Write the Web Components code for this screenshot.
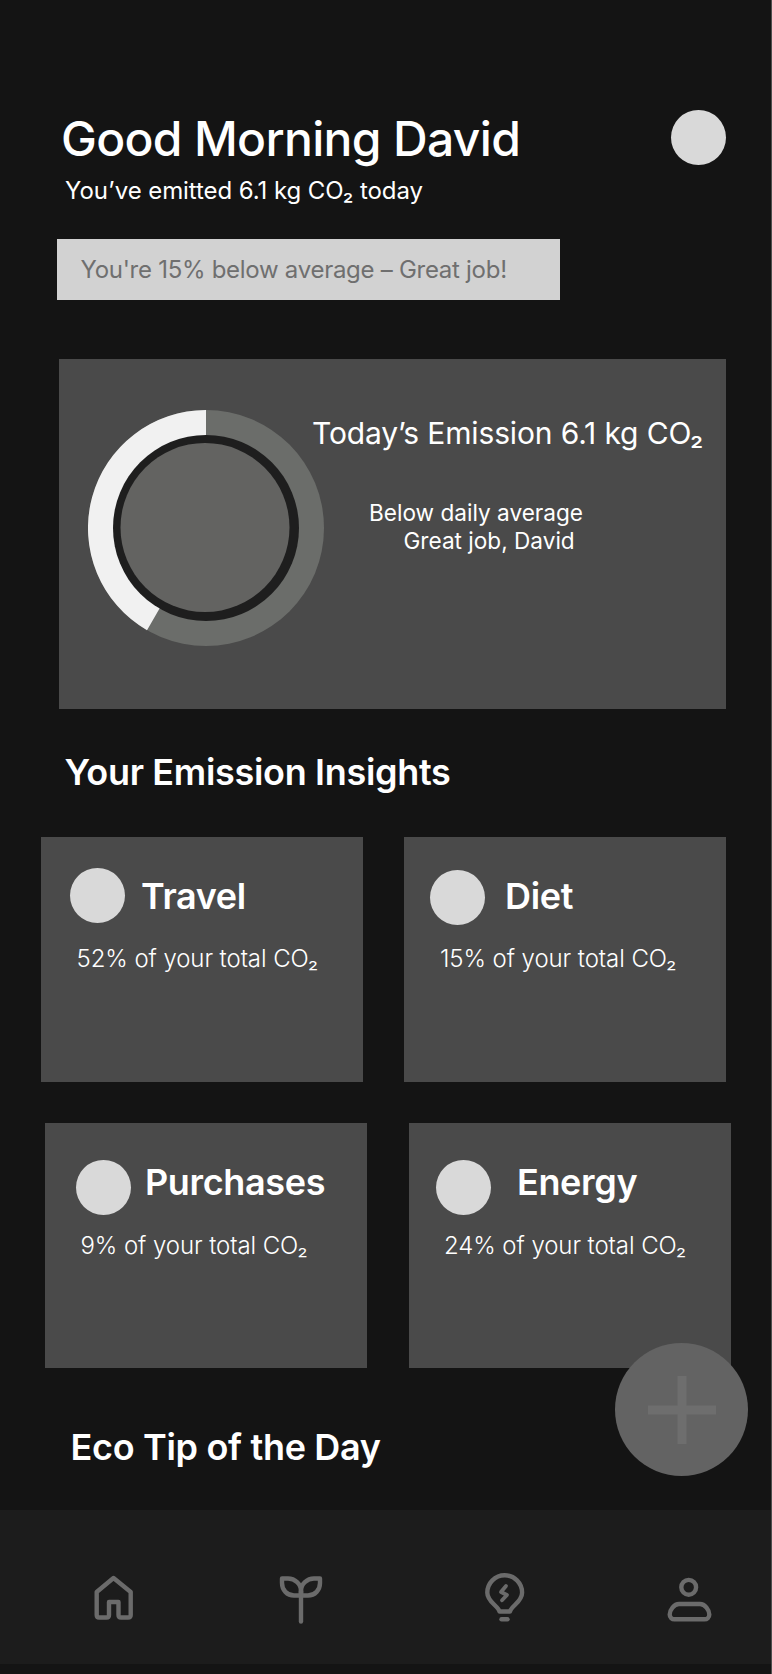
<!DOCTYPE html>
<html lang="en">
<head>
<meta charset="utf-8">
<title>Emission dashboard</title>
<style>
  html, body { margin: 0; background: #141414; }
  body { font-family: Inter, "Liberation Sans", sans-serif; color: #fff; }
  app-shell { width: 772px; height: 1674px; }
  dash-header { margin: 110px 45px 0 61px; }
  tip-banner { margin: 34px 0 0 57px; }
  emission-card { margin: 59px 0 0 59px; }
  section-title.insights { margin: 41px 0 0 64.5px; }
  .row { display: grid; grid-template-columns: 322px 322px; column-gap: 41px; }
  .row.first { margin: 43px 0 0 41px; }
  .row.second { margin: 41px 0 0 45px; column-gap: 41.5px; }
  section-title.tip { margin: 57px 0 0 70.5px; }
  bottom-nav { margin-top: 41px; }
</style>
</head>
<body>
<app-shell>
  <dash-header name="Good Morning David" sub="You’ve emitted 6.1 kg CO₂ today"></dash-header>
  <tip-banner>You're 15% below average – Great job!</tip-banner>
  <emission-card></emission-card>
  <section-title class="insights">Your Emission Insights</section-title>
  <div class="row first">
    <insight-card label="Travel" style="--left:29px;--top:31px;--gap:16px;--shift:0px;--text-x:35.5px;--text-top:20.5px">52% of your total CO₂</insight-card>
    <insight-card label="Diet" style="--left:26px;--top:33px;--gap:20px;--shift:-2px;--text-x:36px;--text-top:18.5px">15% of your total CO₂</insight-card>
  </div>
  <div class="row second">
    <insight-card label="Purchases" style="--left:31px;--top:37px;--gap:14px;--shift:-5.5px;--text-x:35.5px;--text-top:15.5px">9% of your total CO₂</insight-card>
    <insight-card label="Energy" style="--left:27.5px;--top:37px;--gap:26px;--shift:-5.5px;--text-x:35.5px;--text-top:15.5px">24% of your total CO₂</insight-card>
  </div>
  <section-title class="tip">Eco Tip of the Day</section-title>
  <fab-button></fab-button>
  <bottom-nav></bottom-nav>
</app-shell>

<script>
class AppShell extends HTMLElement {
  connectedCallback() {
    this.attachShadow({ mode: 'open' });
    this.shadowRoot.innerHTML = `
      <style>
        :host { display: block; position: relative; box-sizing: border-box; overflow: hidden;
                padding-top: 0.02px; background: #141414; border-right: 1px solid #4f4f4f; }
      </style>
      <slot></slot>`;
  }
}

class DashHeader extends HTMLElement {
  connectedCallback() {
    this.attachShadow({ mode: 'open' });
    this.shadowRoot.innerHTML = `
      <style>
        :host { display: block; }
        .top { display: flex; justify-content: space-between; align-items: flex-start; }
        h1 { margin: 0; font-size: 48px; line-height: 58px; font-weight: 450; letter-spacing: -0.67px; color: #fff; }
        .avatar { width: 55px; height: 55px; border-radius: 50%; background: #d9d9d9; }
        p { margin: 8px 0 0 4px; font-size: 24px; line-height: 29px; font-weight: 400; letter-spacing: -0.07px; color: #fff; }
      </style>
      <div class="top">
        <h1>${this.getAttribute('name')}</h1>
        <div class="avatar"></div>
      </div>
      <p>${this.getAttribute('sub')}</p>`;
  }
}

class TipBanner extends HTMLElement {
  connectedCallback() {
    this.attachShadow({ mode: 'open' });
    this.shadowRoot.innerHTML = `
      <style>
        :host { display: block; box-sizing: border-box; width: 503px; height: 61px; background: #d2d2d2;
                padding: 15.5px 0 0 23.5px; font-size: 24px; line-height: 29px; letter-spacing: -0.28px; color: #6f6f6f; }
      </style>
      <slot></slot>`;
  }
}

class EmissionDonut extends HTMLElement {
  connectedCallback() {
    this.attachShadow({ mode: 'open' });
    // ring is 150 degrees white, counter clockwise from the top
    this.shadowRoot.innerHTML = `
      <style>
        :host { display: block; width: 236px; height: 236px; }
        svg { display: block; }
      </style>
      <svg width="236" height="236" viewBox="0 0 236 236">
        <circle cx="118" cy="118" r="118" fill="#6b6d6a"/>
        <path d="M118 118 V0 A118 118 0 0 0 59 220.2 Z" fill="#f1f1f1"/>
        <circle cx="118" cy="118" r="93" fill="#1e1e1e"/>
        <circle cx="117" cy="117.5" r="84.5" fill="#636361"/>
      </svg>`;
  }
}

class EmissionCard extends HTMLElement {
  connectedCallback() {
    this.attachShadow({ mode: 'open' });
    this.shadowRoot.innerHTML = `
      <style>
        :host { display: flex; box-sizing: border-box; width: 667px; height: 350px; background: #4a4a4a;
                padding: 51px 0 0 29px; color: #fff; }
        .copy { margin: 5px 0 0 -12px; }
        h2 { margin: 0; font-size: 30px; line-height: 36px; font-weight: 400; letter-spacing: -0.14px; white-space: nowrap; }
        p { margin: 48px 0 0 57px; font-size: 22.6px; line-height: 28px; font-weight: 400; }
        span { display: block; }
        span + span { margin-left: 34.5px; }
      </style>
      <emission-donut></emission-donut>
      <div class="copy">
        <h2>Today’s Emission 6.1 kg CO₂</h2>
        <p><span>Below daily average</span><span>Great job, David</span></p>
      </div>`;
  }
}

class SectionTitle extends HTMLElement {
  connectedCallback() {
    this.attachShadow({ mode: 'open' });
    this.shadowRoot.innerHTML = `
      <style>
        :host { display: block; font-size: 36px; line-height: 44px; font-weight: 600; letter-spacing: -0.32px; color: #fff; }
      </style>
      <slot></slot>`;
  }
}

class InsightCard extends HTMLElement {
  connectedCallback() {
    this.attachShadow({ mode: 'open' });
    this.shadowRoot.innerHTML = `
      <style>
        :host { display: block; box-sizing: border-box; height: 245px; background: #4a4a4a; color: #fff;
                padding: var(--top) 0 0 var(--left); }
        .head { display: flex; align-items: center; gap: var(--gap); height: 55px; }
        .dot { flex: none; width: 55px; height: 55px; border-radius: 50%; background: #d9d9d9; }
        .label { font-size: 36px; line-height: 44px; font-weight: 600; letter-spacing: -0.35px; margin-top: calc(var(--shift) * 2); }
        .text { margin: var(--text-top) 0 0 calc(var(--text-x) - var(--left)); font-size: 24px; line-height: 29px;
                font-weight: 300; letter-spacing: -0.08px; }
      </style>
      <div class="head">
        <div class="dot"></div>
        <div class="label">${this.getAttribute('label')}</div>
      </div>
      <div class="text"><slot></slot></div>`;
  }
}

class FabButton extends HTMLElement {
  connectedCallback() {
    this.attachShadow({ mode: 'open' });
    this.shadowRoot.innerHTML = `
      <style>
        :host { position: absolute; left: 615px; top: 1343px; width: 133px; height: 133px; border-radius: 50%;
                background: #636363; display: flex; align-items: center; justify-content: center; }
        svg { display: block; }
      </style>
      <svg width="68" height="68" viewBox="0 0 68 68">
        <path d="M29.5 0 H38.5 V29.5 H68 V38.5 H38.5 V68 H29.5 V38.5 H0 V29.5 H29.5 Z" fill="#6e6e6e"/>
      </svg>`;
  }
}

const NAV_ICONS = {
  home: `<path d="M16.7 31 L33.5 17 L50.7 31 V54 Q50.7 56.5 48 56.5 H41 Q38.5 56.5 38.5 54 V41 H29 V54 Q29 56.5 26.5 56.5 H19 Q16.7 56.5 16.7 54 Z"/>`,
  sprout: `<path d="M17 17.5 H23 C30 17.5 36 23 36 30 V34.5 H29 C22 34.5 17 29 17 22 Z"/><path d="M55 17.5 H49 C42 17.5 36 23 36 30 V34.5 H43 C50 34.5 55 29 55 22 Z"/><path d="M36 30 V60.5"/>`,
  bulb: `<path d="M29.5 50.5 H40 C41 45 52.1 41 52.1 31.7 A17.4 17.4 0 0 0 17.3 31.7 C17.3 41 28.5 45 29.5 50.5 Z"/><path stroke-width="3.8" d="M36 25 L31 31 L37 34 L32 39.3"/><path d="M31.5 58.3 H37.5"/>`,
  person: `<circle cx="33.7" cy="26.3" r="7.4"/><path d="M24 43 H45 C50 43 54.3 49 54.3 53.5 C54.3 56.5 52 58.3 49.5 58.3 H19.5 C17 58.3 14.7 56.5 14.7 53.5 C14.7 49 19 43 24 43 Z"/>`
};

class BottomNav extends HTMLElement {
  connectedCallback() {
    this.attachShadow({ mode: 'open' });
    const icon = (name) => `<svg width="70" height="70" viewBox="0 0 70 70">${NAV_ICONS[name]}</svg>`;
    this.shadowRoot.innerHTML = `
      <style>
        :host { display: flex; box-sizing: border-box; height: 154px; background: #1c1c1c; padding: 51px 0 0 80px; }
        svg { display: block; flex: none; fill: none; stroke: #6b6b6b; stroke-width: 4.4; stroke-linecap: round; stroke-linejoin: round; }
        svg:nth-of-type(2) { margin-left: 115px; }
        svg:nth-of-type(3) { margin-left: 135px; }
        svg:nth-of-type(4) { margin-left: 115px; }
      </style>
      ${icon('home')}${icon('sprout')}${icon('bulb')}${icon('person')}`;
  }
}

customElements.define('app-shell', AppShell);
customElements.define('dash-header', DashHeader);
customElements.define('tip-banner', TipBanner);
customElements.define('emission-donut', EmissionDonut);
customElements.define('emission-card', EmissionCard);
customElements.define('section-title', SectionTitle);
customElements.define('insight-card', InsightCard);
customElements.define('fab-button', FabButton);
customElements.define('bottom-nav', BottomNav);
</script>
</body>
</html>
